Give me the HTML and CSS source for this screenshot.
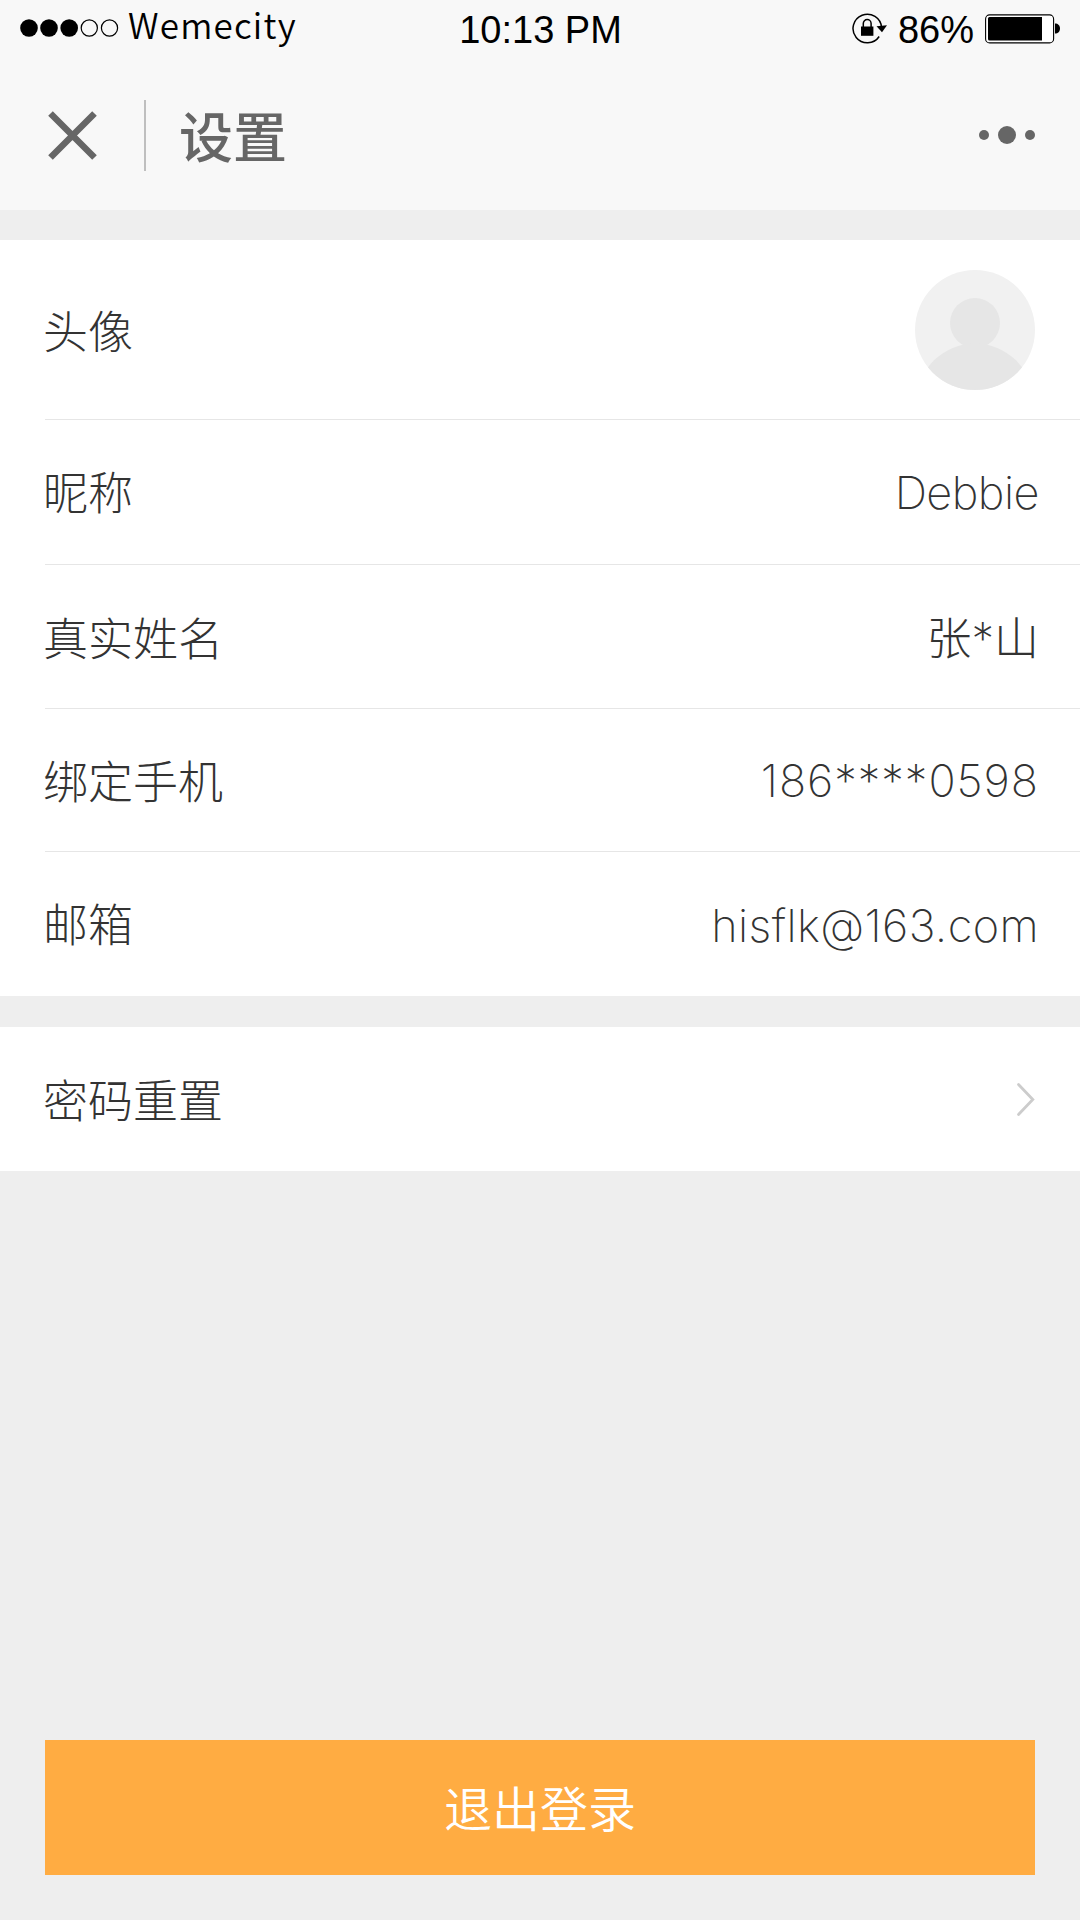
FILE: index.html
```html
<!DOCTYPE html>
<html lang="zh-CN">
<head>
<meta charset="utf-8">
<title>设置</title>
<link rel="stylesheet" href="styles.css">
</head>
<body>
<div class="screen">
  <div class="statusbar">
    <div class="carrier">
      <svg class="signal" width="100" height="20" viewBox="0 0 100 20">
        <circle cx="9" cy="10" r="8.8"/><circle cx="29" cy="10" r="8.8"/><circle cx="49.2" cy="10" r="8.8"/>
        <g fill="none" stroke="#000" stroke-width="1.2"><circle cx="69.3" cy="10" r="8.1"/><circle cx="89.5" cy="10" r="8.1"/></g>
      </svg>
      <span class="carrier-name">Wemecity</span>
    </div>
    <div class="time">10:13 PM</div>
    <div class="power">
      <svg class="lock" width="36" height="32" viewBox="0 0 36 32">
        <path d="M29.6 14.5A14.3 14.3 0 1 0 27.2 23.5" fill="none" stroke="#000" stroke-width="1.5"/>
        <path d="M24.5 13.3L35 12.3L30 19.3Z"/>
        <path d="M9 13.5h12.4v9.3H9z"/>
        <path d="M11.3 14v-3.500a3.900 3.900 0 0 1 7.800 0V14" fill="none" stroke="#000" stroke-width="1.500"/>
      </svg>
      <span class="percent">86%</span>
      <svg class="battery" width="76" height="30" viewBox="0 0 76 30">
        <rect x=".6" y=".9" width="68" height="28" rx="4" fill="#fff" stroke="#000" stroke-width="1.1"/>
        <path d="M4.500 3H57v23.500H4.500Q3 26.500 3 25V4.500Q3 3 4.500 3Z"/>
        <path d="M70 9.500c3 0 5 2 5 5s-2 5-5 5z"/>
      </svg>
    </div>
  </div>
  <header class="navbar">
    <svg class="close" width="50" height="50" viewBox="0 0 50 50"><path d="M3.500 3.500L47.500 47.500M47.500 3.500L3.500 47.500" stroke="#666" stroke-width="6.500"/></svg>
    <span class="divider"></span>
    <h1 class="title">设置</h1>
    <svg class="more" width="56" height="18" viewBox="0 0 56 18" fill="#666"><circle cx="5" cy="9" r="5"/><circle cx="28" cy="9" r="9"/><circle cx="51" cy="9" r="5"/></svg>
  </header>

  <section class="group">
    <div class="row row-avatar">
      <span class="label">头像</span>
      <svg class="avatar" width="120" height="120" viewBox="0 0 120 120">
        <defs><clipPath id="disc"><circle cx="60" cy="60" r="60"/></clipPath></defs>
        <g clip-path="url(#disc)"><rect width="120" height="120" fill="#f1f1f1"/>
        <circle cx="60" cy="53" r="25" fill="#e6e6e6"/><ellipse cx="60" cy="131" rx="58" ry="57.500" fill="#e6e6e6"/></g>
      </svg>
    </div>
    <div class="row row-nick"><span class="label">昵称</span><span class="value nick">Debbie</span></div>
    <div class="row row-name"><span class="label">真实姓名</span><span class="value name">张<span class="mask">*</span>山</span></div>
    <div class="row row-phone"><span class="label">绑定手机</span><span class="value phone">186****0598</span></div>
    <div class="row row-mail"><span class="label">邮箱</span><span class="value mail">hisflk@163.com</span></div>
  </section>

  <section class="group">
    <div class="row row-reset">
      <span class="label">密码重置</span>
      <svg class="chevron" width="20" height="36" viewBox="0 0 20 36"><path d="M3.500 3.500L17.800 18.500L3.500 33.500" fill="none" stroke="#ccc" stroke-width="2.800" stroke-linecap="round"/></svg>
    </div>
  </section>

  <button class="logout">退出登录</button>
</div>
</body>
</html>
```
FILE: styles.css
```css
* { box-sizing: border-box; }
body {
  margin: 0;
  background: #eee;
  color: #333;
  font-family: "Noto Sans CJK SC", sans-serif;
}
svg { display: block; flex: none; }
.screen {
  width: 1080px;
  height: 1920px;
  display: flex;
  flex-direction: column;
}
.statusbar {
  height: 60px;
  padding: 0 20px;
  background: #f8f8f8;
  color: #000;
  display: grid;
  grid-template-columns: 1fr auto 1fr;
  align-items: center;
}
.carrier, .power { display: flex; align-items: center; }
.carrier { gap: 8px; padding-bottom: 4px; }
.carrier-name {
  margin-bottom: 10px;
  font-size: 35px;
  font-weight: 350;
  line-height: 41px;
  letter-spacing: 1.2px;
}
.time, .percent {
  font: 38px/52px "Liberation Sans", Arial, sans-serif;
}
.time { padding: 0 0 0 1px; }
.power { justify-content: flex-end; padding-bottom: 3px; }
.lock { margin-right: 10px; }
.percent { margin-right: 11px; padding-top: 2px; }
.battery { margin: 0 -1px 0 0; }
.navbar {
  height: 150px;
  padding: 0 45px 0 47px;
  background: #f8f8f8;
  display: flex;
  align-items: center;
}
.divider {
  width: 2px;
  height: 71px;
  margin: 0 33px 0 47px;
  background: #bfbfbf;
}
.title {
  flex: 1;
  margin: 0;
  color: #666;
  font-size: 54px;
  font-weight: 500;
  line-height: 80px;
}
.group {
  margin-top: 30px;
  padding-left: 45px;
  background: #fff;
}
.group + .group { margin-top: 31px; }
.row {
  height: 144px;
  padding-right: 45px;
  border-bottom: 1px solid #e6e6e6;
  display: flex;
  align-items: center;
  justify-content: space-between;
  font-size: 45px;
  font-weight: 300;
  line-height: 66px;
}
.row:last-child { border-bottom: 0; }
.row-avatar { height: 180px; }
.row-nick { height: 145px; }
.row-phone { height: 143px; }
.label { margin-left: -2px; }
.row-nick .label, .row-mail .label { padding-bottom: 3px; }
.value {
  margin-right: -4px;
  font-family: Inter, "Noto Sans CJK SC", sans-serif;
  font-weight: 200;
}
.nick { padding-top: 2px; letter-spacing: -.5px; }
.name { padding-top: 4px; font-weight: 300; }
.mask { font-weight: 200; }
.phone { padding-top: 1px; letter-spacing: 1px; }
.mail { padding-top: 3px; letter-spacing: .4px; }
.logout {
  height: 135px;
  margin: auto 45px 45px;
  padding: 0 0 3px;
  border: 0;
  background: #ffac42;
  color: #fff;
  font: 350 48px/70px "Noto Sans CJK SC", sans-serif;
}
```
